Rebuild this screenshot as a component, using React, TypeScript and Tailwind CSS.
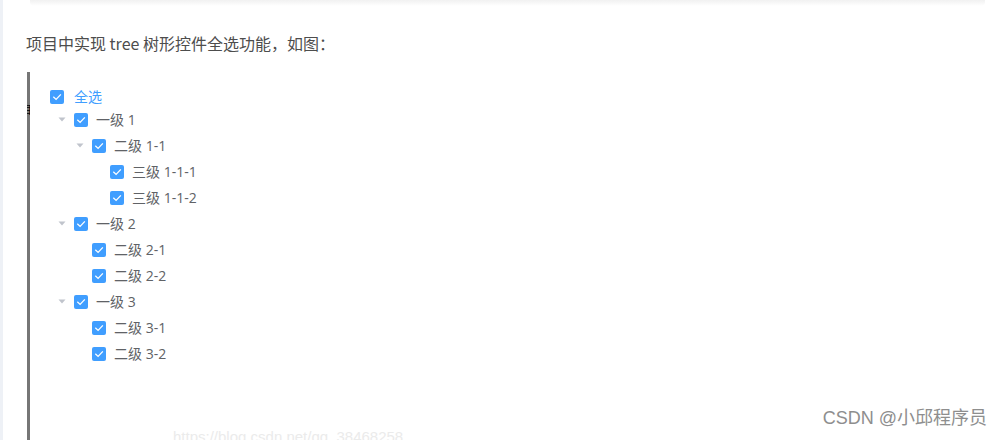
import React from "react";

type Node = { label: string; level: number; arrow: boolean };

const nodes: Node[] = [
  { label: "一级 1", level: 1, arrow: true },
  { label: "二级 1-1", level: 2, arrow: true },
  { label: "三级 1-1-1", level: 3, arrow: false },
  { label: "三级 1-1-2", level: 3, arrow: false },
  { label: "一级 2", level: 1, arrow: true },
  { label: "二级 2-1", level: 2, arrow: false },
  { label: "二级 2-2", level: 2, arrow: false },
  { label: "一级 3", level: 1, arrow: true },
  { label: "二级 3-1", level: 2, arrow: false },
  { label: "二级 3-2", level: 2, arrow: false },
];

const indent: Record<number, string> = {
  1: "pl-0",
  2: "pl-[18px]",
  3: "pl-[36px]",
};

function Checkbox() {
  return (
    <span className="w-[14px] h-[14px] rounded-[2px] bg-[#409eff] flex items-center justify-center shrink-0">
      <svg width="14" height="14" viewBox="0 0 14 14">
        <polyline
          points="3.8,7.2 6.1,9.4 10.4,4.8"
          fill="none"
          stroke="white"
          strokeWidth="1.3"
          strokeLinecap="square"
        />
      </svg>
    </span>
  );
}

function Caret() {
  return (
    <svg width="8" height="5" viewBox="0 0 8 5" className="mt-[-1px]">
      <polygon points="0.5,0.5 7.5,0.5 4,4.5" fill="#c0c4cc" />
    </svg>
  );
}

export default function App() {
  return (
    <div
      className="relative w-[1003px] h-[440px] bg-white overflow-hidden flex"
      style={{ fontFamily: "'Microsoft YaHei', 'Noto Sans CJK SC', sans-serif" }}
    >
      <div className="w-[3px] h-full bg-[#eef1f6] shrink-0" />
      <div className="flex-1 flex flex-col">
        <div className="ml-[27px] w-[955px] h-[6px] rounded-b-[4px] bg-gradient-to-b from-[#f1f1f1] to-white" />
        <p className="ml-[23px] mt-[24px] text-[16px] leading-[26px] text-[#4d4d4d]">
          项目中实现 tree 树形控件全选功能，如图：
        </p>
        <div
          className="relative ml-[24px] mt-[16px] border-l-[3px] border-[#767676] flex-1 pl-[20px] pt-[15px]"
          style={{ fontFamily: "'Open Sans', 'Noto Sans CJK SC', sans-serif" }}
        >
          <div className="h-[20px] flex items-center">
            <Checkbox />
            <span className="ml-[10px] text-[14px] text-[#409eff] leading-[20px]">全选</span>
          </div>
          <div className="flex flex-col">
            {nodes.map((n, i) => (
              <div key={i} className={`h-[26px] flex items-center ${indent[n.level]}`}>
                <span className="w-[24px] h-[26px] flex items-center justify-center shrink-0">
                  {n.arrow ? <Caret /> : null}
                </span>
                <Checkbox />
                <span className="ml-[8px] text-[14px] text-[#606266] leading-[26px]">{n.label}</span>
              </div>
            ))}
          </div>
          <div className="absolute left-[-3px] top-[32px] w-[3px] h-[12px] overflow-hidden">
            <span className="block text-[11px] leading-[12px] text-black ml-[-6px]">目</span>
          </div>
        </div>
      </div>
      <div
        className="absolute left-[173px] top-[428px] text-[15px] leading-[18px] text-[#ebebeb] whitespace-nowrap"
        style={{ fontFamily: "'Liberation Sans', Arial, sans-serif" }}
      >
        https://blog.csdn.net/qq_38468258
      </div>
      <div className="absolute right-[16px] top-[404px] text-[18px] leading-[24px] text-[#8e8e8e] whitespace-nowrap">
        <span style={{ fontFamily: "'Liberation Sans', Arial, sans-serif" }}>CSDN @</span>
        <span>小邱程序员</span>
      </div>
    </div>
  );
}
